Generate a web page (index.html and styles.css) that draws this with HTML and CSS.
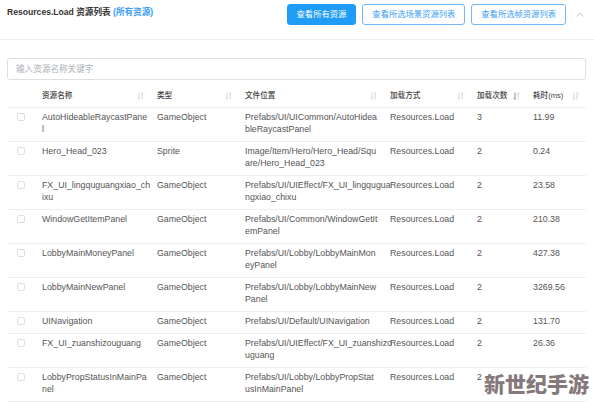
FILE: index.html
```html
<!DOCTYPE html>
<html lang="zh-CN">
<head>
<meta charset="utf-8">
<title>Resources.Load 资源列表</title>
<link rel="stylesheet" href="styles.css">
</head>
<body>
<div class="topbar">
  <div class="title">Resources.Load 资源列表 <span class="link">(所有资源)</span></div>
  <div class="actions">
    <button class="btn btn-primary">查看所有资源</button>
    <button class="btn">查看所选场景资源列表</button>
    <button class="btn">查看所选帧资源列表</button>
  </div>
  <svg class="collapse" viewBox="0 0 8 5" width="8" height="5"><polyline points="0.5,4.5 4,1 7.5,4.5" fill="none" stroke="#c4c7cc" stroke-width="1"/></svg>
</div>
<div class="main">
  <input class="search" type="text" placeholder="输入资源名称关键字">
  <table class="grid">
    <colgroup>
      <col class="c-sel"><col class="c-name"><col class="c-type"><col class="c-path"><col class="c-method"><col class="c-count"><col>
    </colgroup>
    <thead>
      <tr>
        <th></th>
        <th><div class="cell"><span>资源名称</span><svg class="sort" viewBox="0 0 7 8" width="7" height="8"><path d="M2 0.5V7.5L0.5 6" /><path d="M5 7.5V0.5L6.5 2" /></svg></div></th>
        <th><div class="cell"><span>类型</span><svg class="sort" viewBox="0 0 7 8" width="7" height="8"><path d="M2 0.5V7.5L0.5 6" /><path d="M5 7.5V0.5L6.5 2" /></svg></div></th>
        <th><div class="cell"><span>文件位置</span><svg class="sort" viewBox="0 0 7 8" width="7" height="8"><path d="M2 0.5V7.5L0.5 6" /><path d="M5 7.5V0.5L6.5 2" /></svg></div></th>
        <th><div class="cell"><span>加载方式</span><svg class="sort" viewBox="0 0 7 8" width="7" height="8"><path d="M2 0.5V7.5L0.5 6" /><path d="M5 7.5V0.5L6.5 2" /></svg></div></th>
        <th><div class="cell"><span>加载次数</span><svg class="sort" viewBox="0 0 7 8" width="7" height="8"><path class="on" d="M2 0.5V7.5L0.5 6" /><path d="M5 7.5V0.5L6.5 2" /></svg></div></th>
        <th class="last"><div class="cell"><span>耗时(ms)</span><svg class="sort" viewBox="0 0 7 8" width="7" height="8"><path d="M2 0.5V7.5L0.5 6" /><path d="M5 7.5V0.5L6.5 2" /></svg></div></th>
      </tr>
    </thead>
    <tbody>
      <tr><td class="sel"><span class="checkbox"></span></td><td>AutoHideableRaycastPane<br>l</td><td>GameObject</td><td>Prefabs/UI/UICommon/AutoHidea<br>bleRaycastPanel</td><td>Resources.Load</td><td>3</td><td>11.99</td></tr>
      <tr><td class="sel"><span class="checkbox"></span></td><td>Hero_Head_023</td><td>Sprite</td><td>Image/Item/Hero/Hero_Head/Squ<br>are/Hero_Head_023</td><td>Resources.Load</td><td>2</td><td>0.24</td></tr>
      <tr><td class="sel"><span class="checkbox"></span></td><td>FX_UI_lingquguangxiao_ch<br>ixu</td><td>GameObject</td><td>Prefabs/UI/UIEffect/FX_UI_lingqugua<br>ngxiao_chixu</td><td>Resources.Load</td><td>2</td><td>23.58</td></tr>
      <tr><td class="sel"><span class="checkbox"></span></td><td>WindowGetItemPanel</td><td>GameObject</td><td>Prefabs/UI/Common/WindowGetIt<br>emPanel</td><td>Resources.Load</td><td>2</td><td>210.38</td></tr>
      <tr><td class="sel"><span class="checkbox"></span></td><td>LobbyMainMoneyPanel</td><td>GameObject</td><td>Prefabs/UI/Lobby/LobbyMainMon<br>eyPanel</td><td>Resources.Load</td><td>2</td><td>427.38</td></tr>
      <tr><td class="sel"><span class="checkbox"></span></td><td>LobbyMainNewPanel</td><td>GameObject</td><td>Prefabs/UI/Lobby/LobbyMainNew<br>Panel</td><td>Resources.Load</td><td>2</td><td>3269.56</td></tr>
      <tr><td class="sel"><span class="checkbox"></span></td><td>UINavigation</td><td>GameObject</td><td>Prefabs/UI/Default/UINavigation</td><td>Resources.Load</td><td>2</td><td>131.70</td></tr>
      <tr><td class="sel"><span class="checkbox"></span></td><td>FX_UI_zuanshizouguang</td><td>GameObject</td><td>Prefabs/UI/UIEffect/FX_UI_zuanshizo<br>uguang</td><td>Resources.Load</td><td>2</td><td>26.36</td></tr>
      <tr><td class="sel"><span class="checkbox"></span></td><td>LobbyPropStatusInMainPa<br>nel</td><td>GameObject</td><td>Prefabs/UI/Lobby/LobbyPropStat<br>usInMainPanel</td><td>Resources.Load</td><td>2</td><td></td></tr>
    </tbody>
  </table>
</div>
<div class="watermark">新世纪手游</div>
</body>
</html>
```
FILE: styles.css
```css
html, body {
  margin: 0;
  overflow: hidden;
}
body {
  font-family: "Liberation Sans", "Noto Sans CJK SC", sans-serif;
  color: #555;
  background: #fff;
  position: relative;
  height: 403px;
}
.topbar {
  display: flex;
  align-items: flex-start;
  box-sizing: border-box;
  height: 40px;
  padding: 4px 10px 0 7px;
  border-bottom: 1px solid #ebeef5;
}
.title {
  margin-top: 2px;
  font-size: 8.6px;
  line-height: 12px;
  font-weight: 700;
  color: #333;
}
.title .link {
  color: #3a9ef5;
}
.actions {
  margin-left: auto;
  display: flex;
  gap: 6px;
}
.btn {
  height: 21px;
  box-sizing: border-box;
  padding: 0 9px;
  font-family: "Liberation Sans", "Noto Sans CJK SC", sans-serif;
  font-size: 8.3px;
  line-height: 19px;
  border: 1px solid #74b8f6;
  border-radius: 3px;
  background: #fff;
  color: #3a9ef5;
}
.btn-primary {
  background: #1f9df6;
  border-color: #1f9df6;
  color: #fff;
}
.collapse {
  margin-left: 10px;
  margin-top: 8px;
}
.main {
  padding: 18px 8px 0 7px;
}
.search {
  display: block;
  width: 100%;
  height: 22px;
  box-sizing: border-box;
  margin: 0;
  border: 1px solid #dcdfe6;
  border-radius: 3px;
  padding: 0 8px;
  font-family: "Liberation Sans", "Noto Sans CJK SC", sans-serif;
  font-size: 8.6px;
  color: #555;
  outline: none;
}
.search::placeholder {
  color: #aeb1b7;
}
.grid {
  margin-top: 6px;
  width: 100%;
  border-collapse: collapse;
  table-layout: fixed;
}
.c-sel { width: 25px; }
.c-name { width: 115px; }
.c-type { width: 88px; }
.c-path { width: 145px; }
.c-method { width: 87px; }
.c-count { width: 56px; }
.grid th,
.grid td {
  text-align: left;
  vertical-align: top;
  border-bottom: 1px solid #ebeef5;
  line-height: 12px;
  white-space: nowrap;
}
.grid td {
  padding: 3px 1px 6px 10px;
  font-size: 8.8px;
  color: #555;
}
.grid th {
  padding: 4px 3px 5px 10px;
  font-size: 7.6px;
  font-weight: 500;
  color: #444;
}
.grid th.last {
  padding-right: 7px;
}
.cell {
  display: flex;
  justify-content: space-between;
  align-items: center;
}
.sort {
  display: block;
}
.sort path {
  fill: none;
  stroke: #cfd2d6;
  stroke-width: 1;
}
.sort path.on {
  stroke: #8a8d93;
}
.grid td.sel {
  padding-left: 10px;
}
.checkbox {
  display: block;
  width: 8px;
  height: 8px;
  box-sizing: border-box;
  margin-top: 2px;
  border: 1px solid #dcdfe6;
  border-radius: 2px;
  background: #fff;
}
.watermark {
  position: absolute;
  left: 484px;
  top: 373px;
  font-family: "Noto Sans CJK SC", sans-serif;
  font-size: 21px;
  line-height: 21px;
  font-weight: 900;
  color: #85797b;
  text-shadow: 0 0 1px #fff, 0 0 2px #fff, 1px 1px 1px #fff, -1px -1px 1px #fff;
}
```
